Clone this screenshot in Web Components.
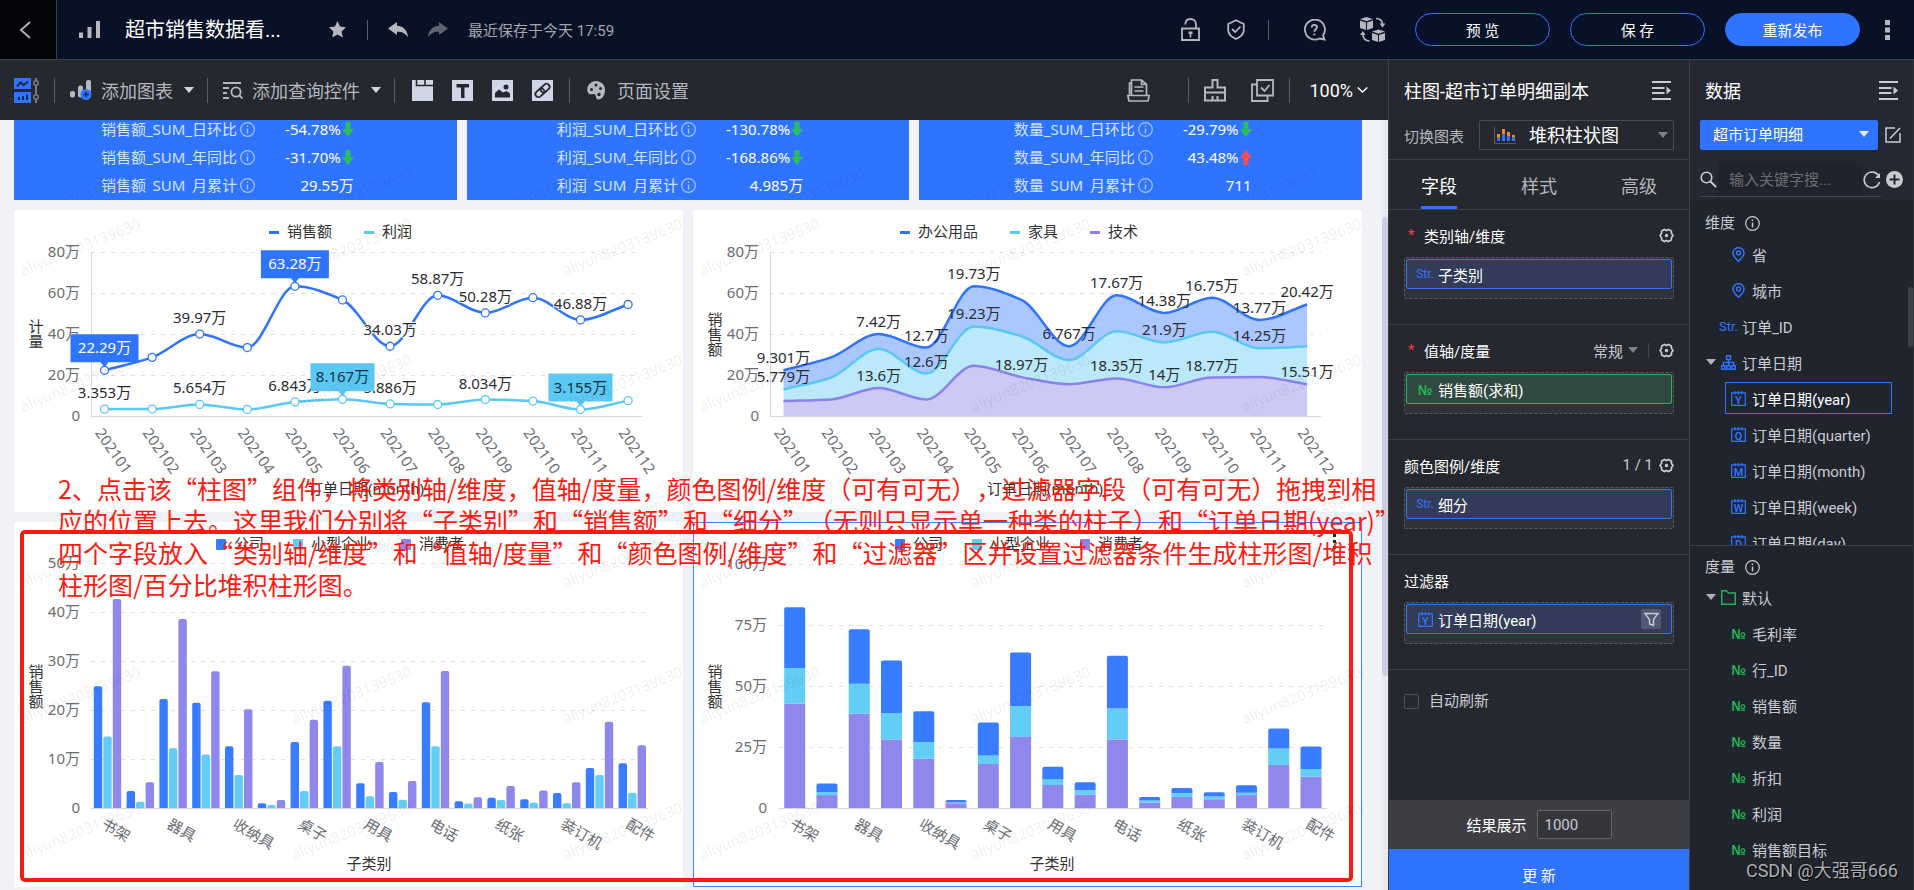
<!DOCTYPE html>
<html lang="zh-CN">
<head>
<meta charset="utf-8">
<title>超市销售数据看板</title>
<style>
html, body { margin: 0; height: 100%; }
body {
  font-family: Roboto, "Noto Sans CJK SC", sans-serif;
  font-size: 15px;
  color: #c9cbd1;
  background: #25282f;
  overflow: hidden;
  --blue: #2f74ff;
  --line: #3d4048;
}
</style>
</head>
<body>
<bi-app></bi-app>
<script>
const define = (tag, html, setup) => {
  const template = document.createElement('template');
  template.innerHTML = html;
  customElements.define(tag, class extends HTMLElement {
    constructor() {
      super();
      this.attachShadow({ mode: 'open' });
    }
    connectedCallback() {
      if (this.shadowRoot.childNodes.length) return;
      this.shadowRoot.append(template.content.cloneNode(true));
      if (setup) setup(this, this.shadowRoot);
    }
  });
};

/* ---------- icons: [width, height, markup] ---------- */
const S = (w, d) => `<path d="${d}" fill="none" stroke="currentColor" stroke-width="${w}"/>`;
const F = d => `<path d="${d}" fill="currentColor"/>`;
const calendar = ch => [15, 15,
  S(1.2, 'M.7 1.8H14.3V14.3H.7Z M4 0V3.5M7.5 0V3.5M11 0V3.5') +
  `<text x="7.5" y="12.5" text-anchor="middle" font-size="11" font-weight="600" font-family="Roboto,sans-serif" fill="currentColor">${ch}</text>`];
const ICONS = {
  back: [12, 18, S(1.8, 'M11 1 2 9 11 17')],
  bars: [21, 17, F('M0 11.5h4V17H0zM8.500 6h4v11h-4zM17 0h4v17h-4z')],
  star: [17, 17, F('M8.5 0 11 5.600 17 6.300 12.600 10.500 13.800 16.500 8.500 13.500 3.200 16.500 4.400 10.500 0 6.300 6 5.600Z')],
  undo: [20, 16, F('M0 6.500 9 0V3.700C15.500 4 19.500 8.500 20 15.500 17.500 11.500 14.500 9.700 9 9.800V13Z')],
  redo: [20, 16, F('M20 6.500 11 0V3.700C4.500 4 .5 8.500 0 15.500 2.500 11.500 5.500 9.700 11 9.800V13Z')],
  lock: [19, 23, S(1.8, 'M1 10.5H18V22H1Z M4.300 6.500C4.500 2.800 6.500 1 9.500 1S15 3.200 15 6.500V10.500') + F('M7.500 13.500h4v2.500h-1.200v3.500H8.700V16H7.500z')],
  shield: [18, 21, S(1.8, 'M9 1.200 16.800 5V11C16.800 15 13.500 18 9 20 4.500 18 1.200 15 1.200 11V5Z M5 10 8.200 13 13.500 7.500')],
  help: [23, 22, S(1.8, 'M20 16.500A10 10 0 1 0 16.500 19.500L21.500 20.500Z M8.700 8.500C8.700 6.700 9.800 5.800 11.300 5.800S14 6.800 14 8.300C14 10.300 11.300 10.300 11.300 12.800M11.300 14.500V16.500')],
  cubes: [26, 25, F('M0 2 6.500 0 13 2 6.500 4.200ZM0 3.500 6 5.500V13L0 11ZM13 3.500 7 5.500V13L13 11ZM12 14.500 18.500 12.500 25 14.500 18.500 16.700ZM12 16 18 18V25L12 23ZM25 16 19 18V25L25 23Z') + S(1.6, 'M16 1.500C20 1.500 22.500 4 22.500 8M9.500 24C5.500 24 2.800 21.500 2.800 16.500') + F('M19.500 6.500H25.500L22.500 10.500ZM0 18H5.600L2.800 14Z')],
  more: [5, 20, F('M0 0h5v5H0zM0 7.500h5v5H0zM0 15h5v5H0z')],
  layout: [25, 25, '<path d="M0 0H17V11H0ZM0 14H17V25H0Z" fill="#2f74ff"/><path d="M3 8.500 6.500 4.500 9.500 7 14 3.500" stroke="#1c2742" stroke-width="2" fill="none"/><path d="M4 19h2v3H4zM8 18h2v4H8zM12 16.500h2V22h-2z" fill="#1c2742"/><path d="M22 0V25" stroke="#777a82" stroke-width="2"/><circle cx="22" cy="5" r="2.200" fill="#25282f" stroke="#777a82" stroke-width="1.500"/><circle cx="22" cy="19" r="2.200" fill="#25282f" stroke="#777a82" stroke-width="1.500"/>'],
  addchart: [22, 20, '<rect x="0" y="11" width="5" height="6.500" rx="2" fill="#b5b7bc"/><rect x="8" y="5.500" width="5" height="12" rx="2" fill="#b5b7bc"/><rect x="16" y="0" width="5" height="16" rx="2" fill="#b5b7bc"/><circle cx="16" cy="14.500" r="5.500" fill="#2f74ff"/><path d="M16 11.700V17.300M13.200 14.500H18.800" stroke="#1c2742" stroke-width="1.500"/>'],
  query: [20, 17, S(1.8, 'M0 1H18M0 6H6M0 11H4M0 16H6M16.500 13.500 19.500 16.500') + '<circle cx="13" cy="10" r="4.600" fill="none" stroke="currentColor" stroke-width="1.800"/>'],
  tab: [21, 21, '<path d="M0 0H21V21H0Z" fill="#d0d6e6"/><path d="M4.500 0V5.500H21M13 0V5.500" fill="none" stroke="#25282f" stroke-width="1.600"/>'],
  text: [21, 21, '<path d="M0 0H21V21H0Z" fill="#d0d6e6"/><path d="M4.500 4H17V7.500H12.500V18H9V7.500H4.500Z" fill="#25282f"/>'],
  image: [21, 21, '<path d="M0 0H21V21H0Z" fill="#d0d6e6"/><path d="M3 17.500V13L7 9.500 11 12.500 14.500 11 18 13.500V17.500Z" fill="#25282f"/><circle cx="14" cy="7" r="2.500" fill="#25282f"/>'],
  link: [21, 21, '<path d="M0 0H21V21H0Z" fill="#d0d6e6"/><g fill="none" stroke="#25282f" stroke-width="1.800" transform="rotate(-42 10.500 10.500)"><rect x="2" y="7.500" width="10" height="6" rx="3"/><rect x="9" y="7.500" width="10" height="6" rx="3"/></g>'],
  palette: [18, 19, '<path d="M9 0C14 0 18 3.500 18 9S15 18.500 11.500 18.500C8.500 18.500 9.500 15 8 13.500 6.500 12 4 14.500 1.500 12.500-2 8 2 0 9 0Z" fill="#b5b7bc"/><g fill="#25282f"><circle cx="4.500" cy="8.500" r="1.500"/><circle cx="9" cy="4" r="1.500"/><circle cx="13.500" cy="7.500" r="1.500"/><circle cx="12" cy="13.500" r="1.700"/></g>'],
  book: [23, 23, S(1.7, 'M4.500 15.500V4H2.500V15.500M4.500 16V1H14.500L19.500 5.500V16M14.500 1V5.500H19.500M7.500 8H16.500M7.500 12H16.500M.8 16.500H22.200L21 22H2Z')],
  brush: [22, 23, S(2, 'M1 21.500V8.500H8.500V1H13.500V8.500H21V21.500ZM1 13.500H21M8.500 21V17M13.500 21V17')],
  copycheck: [23, 23, S(1.8, 'M6 1H22V16.500H6ZM6 5.500H1V22H16.500V16.500M10 8.500 13.500 12 18.500 6')],
  down: [11, 6, S(1.4, 'M.7.500 5.500 5 10.300.500')],
  caret: [10, 6, F('M0 0H10L5 6Z')],
  collapse: [19, 19, S(1.8, 'M0 1H19M0 7H12.500M0 12H12.500M0 18H19') + F('M14.500 5.500 19 9.500 14.500 13.500Z')],
  stacked: [22, 17, '<path d="M.500 0V16.500H22" fill="none" stroke="#55585f"/><path d="M3 9h3v5H3zM8 7h3v7H8zM13 7.500h3V14h-3zM18 10.500h3V14h-3z" fill="#2f74ff"/><path d="M3 7h3v3.500H3zM8 2h3v5H8zM13 5h3v4h-3zM18 8h3v2.500h-3z" fill="#f08a24"/>'],
  gear: [15, 15, S(1.7, 'M5.500 1.500 7.500 2.500 9.500 1.500 12.300 3 12.500 5.500 14 7.500 12.500 9.500 12.300 12 9.500 13.500 7.500 12.500 5.500 13.500 2.700 12 2.500 9.500 1 7.500 2.500 5.500 2.700 3Z') + '<circle cx="7.500" cy="7.500" r="1.700" fill="currentColor"/>'],
  funnel: [15, 15, S(1.4, 'M1 1.500H14L9.500 7.500V13.500L5.500 12V7.500Z')],
  edit: [16, 16, S(1.5, 'M10 1H1V15H15V6M5 11.500 15 1')],
  search: [17, 17, '<circle cx="6.500" cy="6.500" r="5.300" fill="none" stroke="currentColor" stroke-width="1.600"/>' + S(1.8, 'M10.500 10.500 16 16')],
  refresh: [18, 18, S(1.6, 'M15.500 4.500A7.800 7.800 0 1 0 16.500 11') + F('M17 2V7H12Z')],
  plus: [17, 17, '<circle cx="8.500" cy="8.500" r="8.500" fill="#c9cbd1"/><path d="M8.500 3.500V13.500M3.500 8.500H13.500" stroke="#252833" stroke-width="2"/>'],
  info: [15, 15, '<circle cx="7.500" cy="7.500" r="6.800" fill="none" stroke="currentColor" stroke-width="1.200"/><path d="M7.500 6.500V11.500M7.500 3.500V5" stroke="currentColor" stroke-width="1.400"/>'],
  pin: [15, 15, S(1.5, 'M7.500 14.300C4 11 2 8.800 2 6.200A5.500 5.500 0 0 1 13 6.200C13 8.800 11 11 7.500 14.300Z') + '<circle cx="7.500" cy="6" r="2" fill="none" stroke="currentColor" stroke-width="1.400"/>'],
  tree: [15, 15, S(1.4, 'M5.500.700H9.500V4.500H5.500ZM.700 10.700H4V14.300H.700ZM5.800 10.700H9.200V14.300H5.800ZM11 10.700H14.300V14.300H11ZM7.500 4.500V10.700M2.300 10.700V7.500H12.700V10.700')],
  folder: [15, 15, '<path d="M.700.700H5.500L7.500 3H14.300V14.300H.700Z" fill="none" stroke="currentColor" stroke-width="1.500"/>'],
  arrowdown: [12, 15, '<path d="M3.500 0H8.500V7H12L6 15 0 7H3.500Z" fill="#2bbf5b"/>'],
  arrowup: [12, 15, '<path d="M3.500 15H8.500V8H12L6 0 0 8H3.500Z" fill="#fa4f4a"/>'],
  calY: calendar('Y'), calQ: calendar('Q'), calM: calendar('M'), calW: calendar('W'), calD: calendar('D')
};
define('ui-icon', `<style>:host{display:inline-flex;flex:none}svg{display:block}</style>`, (host, root) => {
  const [w, h, body] = ICONS[host.getAttribute('name')];
  root.innerHTML += `<svg width="${w}" height="${h}" viewBox="0 0 ${w} ${h}" aria-hidden="true">${body}</svg>`;
});

/* ---------- top bar ---------- */
define('top-bar', `
<style>
:host { display: flex; align-items: center; height: 59px; background: #081126; border-bottom: 1px solid var(--line); color: #b5b7bc; }
button { font: inherit; color: inherit; background: none; border: 0; padding: 0; cursor: pointer; display: flex; align-items: center; justify-content: center; }
.back { width: 57px; height: 59px; background: #02040a; border-right: 1px solid var(--line); box-sizing: border-box; padding-right: 6px; }
.logo { margin: 0 25px 0 22px; }
h1 { margin: 0 46px 0 0; font-size: 20px; font-weight: 400; line-height: 28px; color: #fff; width: 158px; white-space: nowrap; }
.rule { width: 1px; height: 20px; background: #5a5f6b; }
.star { margin-right: 21px; }
.undo { margin: 0 20px; }
.redo { margin-right: 20px; opacity: .5; }
.saved { color: #a3a7af; white-space: nowrap; }
.right { margin-left: auto; display: flex; align-items: center; padding-right: 24px; }
.shield { margin: 0 23px 0 27px; }
.help { margin: 0 34px; }
.cubes { margin-right: 29px; }
.pill { box-sizing: border-box; width: 135px; height: 33px; border: 1px solid var(--blue); border-radius: 17px; margin-right: 20px; color: #fff; }
.solid { background: var(--blue); margin-right: 25px; }
</style>
<button class="back" aria-label="返回"><ui-icon name="back"></ui-icon></button>
<ui-icon class="logo" name="bars"></ui-icon>
<h1>超市销售数据看...</h1>
<button class="star" aria-label="收藏"><ui-icon name="star"></ui-icon></button>
<span class="rule"></span>
<button class="undo" aria-label="撤销"><ui-icon name="undo"></ui-icon></button>
<button class="redo" aria-label="重做"><ui-icon name="redo"></ui-icon></button>
<span class="saved">最近保存于今天 17:59</span>
<div class="right">
  <button aria-label="解锁"><ui-icon name="lock"></ui-icon></button>
  <button class="shield" aria-label="安全"><ui-icon name="shield"></ui-icon></button>
  <span class="rule"></span>
  <button class="help" aria-label="帮助"><ui-icon name="help"></ui-icon></button>
  <button class="cubes" aria-label="切换"><ui-icon name="cubes"></ui-icon></button>
  <button class="pill">预 览</button>
  <button class="pill">保 存</button>
  <button class="pill solid">重新发布</button>
  <button aria-label="更多"><ui-icon name="more"></ui-icon></button>
</div>`);

/* ---------- tool bar ---------- */
define('tool-bar', `
<style>
:host { display: flex; align-items: center; height: 60px; padding: 0 20px 0 14px; background: #25282f; color: #b5b7bc; font-size: 18px; box-sizing: border-box; }
button { font: inherit; color: inherit; background: none; border: 0; padding: 0; cursor: pointer; display: flex; align-items: center; white-space: nowrap; }
.rule { width: 1px; height: 25px; background: #5c5f66; margin: 0 15px; }
.gap { gap: 9px; }
.gap .caret { margin: 0 -2px 0 2px; color: #d0d6e6; }
.set { display: flex; gap: 19px; margin: 0 1px 0 2px; }
.page { gap: 12px; margin-left: 2px; }
.right { margin-left: auto; display: flex; align-items: center; }
.book { margin-right: 23px; }
.copy { margin-left: 25px; }
.zoom { margin-left: 4px; gap: 4px; color: #fff; }
</style>
<button aria-label="布局"><ui-icon name="layout"></ui-icon></button>
<span class="rule"></span>
<button class="gap"><ui-icon name="addchart"></ui-icon>添加图表<ui-icon class="caret" name="caret"></ui-icon></button>
<span class="rule"></span>
<button class="gap"><ui-icon name="query"></ui-icon>添加查询控件<ui-icon class="caret" name="caret"></ui-icon></button>
<span class="rule"></span>
<div class="set">
  <button aria-label="选项卡"><ui-icon name="tab"></ui-icon></button>
  <button aria-label="文本"><ui-icon name="text"></ui-icon></button>
  <button aria-label="图片"><ui-icon name="image"></ui-icon></button>
  <button aria-label="链接"><ui-icon name="link"></ui-icon></button>
</div>
<span class="rule"></span>
<button class="page"><ui-icon name="palette"></ui-icon>页面设置</button>
<div class="right">
  <button class="book" aria-label="文档"><ui-icon name="book"></ui-icon></button>
  <span class="rule"></span>
  <button aria-label="清理"><ui-icon name="brush"></ui-icon></button>
  <button class="copy" aria-label="批量"><ui-icon name="copycheck"></ui-icon></button>
  <span class="rule"></span>
  <button class="zoom">100%<ui-icon name="down"></ui-icon></button>
</div>`);

/* ---------- repeated account mark laid over every card ---------- */
define('account-mark', `
<style>
:host { position: absolute; inset: 0; overflow: hidden; pointer-events: none; }
svg { display: block; width: 100%; height: 100%; }
text { font: 15px "Noto Sans", sans-serif; fill: #000; fill-opacity: .08; }
</style>`, (host, root) => {
  const top = Number(host.getAttribute('top') || 66);
  const cols = Number(host.getAttribute('cols') || 3);
  const rows = Number(host.getAttribute('rows') || 3);
  let s = '';
  for (let r = 0; r < rows; r++) for (let c = 0; c < cols; c++)
    s += `<text transform="translate(${9 + c * 271} ${top + r * 136}) rotate(-22)">aliyun8203139630</text>`;
  root.innerHTML += `<svg aria-hidden="true">${s}</svg>`;
});

/* ---------- KPI card ---------- */
define('kpi-card', `
<style>
:host { display: block; position: relative; background: var(--blue); color: #fff; font-family: "Noto Sans", "Noto Sans CJK SC", sans-serif; padding: 0 16px 5px 0; }
dl { margin: -1px 0 0; display: grid; grid-template-columns: auto auto; grid-auto-rows: 20px; justify-content: center; gap: 8px 30px; line-height: 20px; white-space: nowrap; }
dt { display: flex; align-items: center; gap: 3px; color: #d5e3ff; }
dt ui-icon { color: #a9c6ff; }
dd { margin: 0; display: flex; align-items: center; justify-content: flex-end; gap: 1px; }
.faint { opacity: 0; }
</style>
<dl></dl>
<account-mark top="106" cols="2" rows="1"></account-mark>`, (host, root) => {
  const name = host.getAttribute('name');
  root.querySelector('dl').innerHTML = host.getAttribute('rows').split(';').map(row => {
    const [label, value, dir] = row.split(',');
    const join = dir ? '_' : '<span class="faint">_</span>';
    return `<dt><span>${name}${join}SUM${join}${label}</span><ui-icon name="info"></ui-icon></dt><dd>${value}${dir ? `<ui-icon name="arrow${dir}"></ui-icon>` : ''}</dd>`;
  }).join('');
});

/* ---------- charts ---------- */
const BLUE = '#2f74ff', CYAN = '#5bc8f3', VIOLET = '#8b83ea';
const CHART_CSS = `<style>
:host { display: block; position: relative; background: #fff; font-family: "Noto Sans", "Noto Sans CJK SC", sans-serif; }
:host([selected]) { outline: 1px solid #3b86ff; outline-offset: -1px; }
svg.plot { display: block; width: 100%; height: auto; }
text { font-size: 15px; fill: #333; }
.tick { fill: #6a6d73; }
.value { fill: #2a2c30; }
.halo { paint-order: stroke; stroke: #fff; stroke-width: 2px; }
.grid { stroke: #dfe0e3; stroke-dasharray: 4 6; }
.axis { stroke: #d6d7da; fill: none; }
.menu { position: absolute; top: 12px; right: 25px; width: 5px; height: 15px; padding: 0; border: 0; background: none; color: #222; }
.menu svg { display: block; }
</style>`;
const text = (x, y, s, anchor = 'middle', cls = '') => `<text class="${cls}" x="${x}" y="${y + 5}" text-anchor="${anchor}">${s}</text>`;
const vertical = (x, y, s) => [...s].map((c, i) => text(x, y + i * 15, c)).join('');
const grid = (x0, x1, y0, step, labels, xl) => labels.map((l, i) => {
  const y = y0 - step * i;
  return text(xl, y, l, 'end', 'tick') + (i ? `<path class="grid" d="M${x0} ${y + .5}H${x1}"/>` : `<path class="axis" d="M${x0} ${y + .5}H${x1}"/>`);
}).join('');
const slanted = (x, y, s, angle) => `<text class="tick" dy="5" transform="translate(${x} ${y}) rotate(${angle})">${s}</text>`;

/* monotone cubic through the points */
function curve(pts) {
  const n = pts.length, d = [], m = [];
  for (let i = 0; i < n - 1; i++) d.push((pts[i + 1][1] - pts[i][1]) / (pts[i + 1][0] - pts[i][0]));
  for (let i = 0; i < n; i++) {
    if (i === 0) m.push(d[0]);
    else if (i === n - 1) m.push(d[n - 2]);
    else m.push(d[i - 1] * d[i] <= 0 ? 0 : 2 * d[i - 1] * d[i] / (d[i - 1] + d[i]));
  }
  let s = `${pts[0][0]} ${pts[0][1]}`;
  for (let i = 0; i < n - 1; i++) {
    const h = (pts[i + 1][0] - pts[i][0]) / 3;
    s += `C${pts[i][0] + h} ${pts[i][1] + m[i] * h} ${pts[i + 1][0] - h} ${pts[i + 1][1] - m[i + 1] * h} ${pts[i + 1][0]} ${pts[i + 1][1]}`;
  }
  return s;
}
const MONTHS = Array.from({ length: 12 }, (_, i) => 202101 + i);
const TOTAL = [22.29, 28.6, 39.97, 33.4, 63.28, 56.6, 34.03, 58.87, 50.28, 57.7, 46.88, 54.4];
const mx = i => 90.5 + i * 47.6;
const my = v => 206 - v * 2.05;
const monthFrame = title => grid(77, 628, 206, 41, ['0', '20万', '40万', '60万', '80万'], 66) +
  '<path class="axis" d="M77.500 42V206"/>' +
  MONTHS.map((m, i) => slanted(mx(i) - 6, 220, m, 55)).join('') +
  text(352, 279, '订单日期(month)') + title;

define('trend-chart', CHART_CSS, (host, root) => {
  const profit = [3.353, 3.4, 5.654, 3.2, 6.843, 8.167, 5.886, 5.6, 8.034, 7.3, 3.155, 7.5];
  const series = [[TOTAL, BLUE, [0, 4], [2, 6, 7, 8, 10]], [profit, CYAN, [5, 10], [0, 2, 4, 6, 8]]];
  let s = monthFrame(vertical(22, 117, '计量'));
  [['销售额', 255, BLUE], ['利润', 350, CYAN]].forEach(([n, x, c]) => { s += `<rect x="${x}" y="21" width="10" height="3" fill="${c}"/>` + text(x + 18, 22, n, 'start'); });
  for (const [vals, color] of series) s += `<path d="M${curve(vals.map((v, i) => [mx(i), my(v)]))}" fill="none" stroke="${color}" stroke-width="2.500"/>`;
  for (const [vals, , , labels] of series) for (const i of labels) s += text(mx(i), my(vals[i]) - 16, vals[i] + '万', 'middle', 'value halo');
  for (const [vals, color, tips] of series) {
    for (const i of tips) {
      const x = mx(i), y = my(vals[i]), w = color === BLUE ? 34 : 32;
      s += `<path d="M${x - w} ${y - 36}H${x + w}V${y - 8}H${x + 4}L${x} ${y - 3}L${x - 4} ${y - 8}H${x - w}Z" fill="${color}"/>` +
        `<text x="${x}" y="${y - 17}" text-anchor="middle" style="fill:${color === BLUE ? '#fff' : '#16323f'}">${vals[i]}万</text>`;
    }
    vals.forEach((v, i) => { s += `<circle cx="${mx(i)}" cy="${my(v)}" r="4" fill="#fff" stroke="${color}" stroke-width="1.300"/>`; });
  }
  root.innerHTML += `<svg class="plot" viewBox="0 0 669 302">${s}</svg><account-mark></account-mark>`;
});

define('area-chart', CHART_CSS, (host, root) => {
  const low = [7.3, 8.1, 13.6, 8.1, 24.5, 18.97, 15.5, 18.35, 14, 18.77, 19, 15.51];
  const mid = [13, 18.8, 32.7, 20.7, 43.7, 38.9, 27.3, 41.3, 35.9, 41.1, 33, 34];
  const zero = low.map(() => 0);
  const pts = v => v.map((y, i) => [mx(i), my(y)]);
  const area = (a, b, c) => `<path d="M${curve(pts(a))}L${curve(pts(b).reverse())}Z" fill="${c}"/>`;
  const line = (a, c) => `<path d="M${curve(pts(a))}" fill="none" stroke="${c}" stroke-width="2.500"/>`;
  let s = monthFrame(vertical(22, 110, '销售额')) +
    area(TOTAL, mid, '#aac7ff') + area(mid, low, '#bbe9fa') + area(low, zero, '#cdc9f5') +
    line(TOTAL, BLUE) + line(mid, CYAN) + line(low, VIOLET);
  [['办公用品', 207, BLUE], ['家具', 317, CYAN], ['技术', 397, VIOLET]].forEach(([n, x, c]) => { s += `<rect x="${x}" y="21" width="10" height="3" fill="${c}"/>` + text(x + 18, 22, n, 'start'); });
  const labels = [
    [TOTAL, { 0: '9.301', 2: '7.42', 3: '12.7', 4: '19.73', 6: '6.767', 7: '17.67', 8: '14.38', 9: '16.75', 10: '13.77', 11: '20.42' }],
    [mid, { 0: '5.779', 3: '12.6', 4: '19.23', 8: '21.9', 10: '14.25' }],
    [low, { 2: '13.6', 5: '18.97', 7: '18.35', 8: '14', 9: '18.77', 11: '15.51' }]];
  for (const [v, map] of labels) for (const i in map) s += text(mx(+i), my(v[i]) - 12, map[i] + '万', 'middle', 'value');
  root.innerHTML += `<svg class="plot" viewBox="0 0 669 302">${s}</svg><account-mark></account-mark>`;
});

const GOODS = [[25, 14.66, 42.9], [3.5, 1.3, 5.3], [22.4, 12.26, 38.8], [21.6, 10.96, 28.1], [12.7, 6.8, 20.3], [1, .6, 1.64], [13.56, 3.5, 18.1], [22, 12.7, 29.2], [5.1, 2.4, 9.45], [3.3, 1.7, 5.55], [21.7, 12.7, 28.15], [1.4, .9, 2.2], [2.1, 1.64, 4.5], [1.8, 1.1, 3.6], [3.1, 1, 5.3], [8.2, 6.8, 17.7], [9.2, 3.15, 12.9]];
const GOODS_NAMES = ['书架', '器具', '收纳具', '桌子', '用具', '电话', '纸张', '装订机', '配件'];
const BARS = ['#387dff', '#62cdf5', '#8f87ec'];
const topRounded = (x, y, w, h, c) => {
  const r = Math.min(2, h);
  return `<path d="M${x} ${y + h}V${y + r}Q${x} ${y} ${x + r} ${y}H${x + w - r}Q${x + w} ${y} ${x + w} ${y + r}V${y + h}Z" fill="${c}"/>`;
};
define('goods-chart', CHART_CSS, (host, root) => {
  const stacked = host.hasAttribute('stacked');
  const legend = [['公司', 202], ['小型企业', 279], ['消费者', 387]]
    .map(([n, x], i) => `<rect x="${x}" y="17" width="10" height="11" rx="1" fill="${BARS[i]}"/>` + text(x + 18, 22, n, 'start')).join('');
  let s = legend + vertical(22, 150, '销售额') + text(stacked ? 359 : 355, 342, '子类别');
  const x0 = stacked ? 91.2 : 79.8, pitch = stacked ? 32.27 : 32.8;
  if (stacked) {
    s += grid(86, 634, 286, 61, ['0', '25万', '50万', '75万', '100万'], 74);
    GOODS.forEach(([a, b, c], g) => {
      const x = x0 + g * pitch, k = 2.433, y1 = 286 - c * k, y2 = y1 - b * k, y3 = y2 - a * k;
      s += `<rect x="${x}" y="${y1}" width="21" height="${c * k}" fill="${BARS[2]}"/><rect x="${x}" y="${y2}" width="21" height="${b * k}" fill="${BARS[1]}"/>` + topRounded(x, y3, 21, a * k, BARS[0]);
    });
  } else {
    s += grid(77, 634, 286, 49, ['0', '10万', '20万', '30万', '40万', '50万'], 66);
    GOODS.forEach((row, g) => row.forEach((v, i) => {
      s += topRounded(x0 + g * pitch + i * 9.5, 286 - v * 4.87, 8.4, v * 4.87, BARS[i]);
    }));
  }
  GOODS_NAMES.forEach((n, i) => { s += slanted(x0 + i * 2 * pitch + (stacked ? 7 : 9), 301, n, 30); });
  root.innerHTML += `<svg class="plot" viewBox="0 0 669 365">${s}</svg><account-mark></account-mark>` +
    (host.hasAttribute('selected') ? '<button class="menu" aria-label="图表菜单"><svg width="5" height="15"><path d="M1 0h3v3H1zM1 6h3v3H1zM1 12h3v3H1z" fill="currentColor"/></svg></button>' : '');
});

/* ---------- dashboard canvas ---------- */
define('dash-board', `
<style>
:host { display: block; position: relative; overflow: hidden; background: #f0f2f7; padding: 0 26px 0 14px; min-height: 0; }
.kpis { display: grid; grid-template-columns: repeat(3, 1fr); gap: 10px; }
.row { display: grid; grid-template-columns: repeat(2, 1fr); gap: 10px; margin-top: 10px; position: relative; }
.frame { position: absolute; inset: 8px 9px 5px 6px; border: 4px solid #ff1a10; border-radius: 5px; pointer-events: none; }
.track { position: absolute; top: 0; right: 0; bottom: 0; width: 6px; background: #e8eaef; }
.thumb { margin-top: 97px; height: 459px; border-radius: 3px; background: #cbd0e0; }
.note { position: absolute; left: 58px; top: 352px; margin: 0; font: 25px/32px "Noto Sans CJK SC", sans-serif; color: #ff1a10; white-space: nowrap; text-spacing-trim: space-all; }
.note span { display: block; }
</style>
<div class="kpis">
  <kpi-card name="销售额" rows="日环比,-54.78%,down;年同比,-31.70%,down;月累计,29.55万"></kpi-card>
  <kpi-card name="利润" rows="日环比,-130.78%,down;年同比,-168.86%,down;月累计,4.985万"></kpi-card>
  <kpi-card name="数量" rows="日环比,-29.79%,down;年同比,43.48%,up;月累计,711"></kpi-card>
</div>
<div class="row"><trend-chart></trend-chart><area-chart></area-chart></div>
<div class="row"><goods-chart></goods-chart><goods-chart stacked selected></goods-chart><div class="frame"></div></div>
<div class="track"><div class="thumb"></div></div>
<p class="note"><span>2、点击该“柱图”组件，将类别轴/维度，值轴/度量，颜色图例/维度（可有可无），过滤器字段（可有可无）拖拽到相</span><span>应的位置上去。这里我们分别将“子类别”和“销售额”和“细分”（无则只显示单一种类的柱子）和“订单日期(year)”</span><span>四个字段放入“类别轴/维度”和“值轴/度量”和“颜色图例/维度”和“过滤器”区并设置过滤器条件生成柱形图/堆积</span><span>柱形图/百分比堆积柱形图。</span></p>`);

/* ---------- chart configuration panel ---------- */
define('field-chip', `
<style>
:host { display: flex; align-items: center; gap: 5px; height: 28px; padding: 0 10px; border: 1px solid var(--blue); border-radius: 2px; background: #323c58; color: #fff; }
:host([measure]) { border-color: #22b455; background: #314a41; }
.type { color: var(--blue); width: 16px; display: flex; justify-content: center; white-space: nowrap; font-size: 12px; }
:host([measure]) .type { color: #22b455; font: 600 14px "Noto Sans", sans-serif; }
.filter { margin-left: auto; width: 20px; height: 20px; border: 0; border-radius: 2px; padding: 0; background: #505a74; color: #c9cbd1; display: flex; align-items: center; justify-content: center; }
</style>
<span class="type"></span><slot></slot>`, (host, root) => {
  root.querySelector('.type').innerHTML = host.hasAttribute('measure') ? '№' : host.hasAttribute('date') ? '<ui-icon name="calY"></ui-icon>' : 'Str.';
  if (host.hasAttribute('date')) root.innerHTML += '<button class="filter" aria-label="筛选"><ui-icon name="funnel"></ui-icon></button>';
});
define('field-section', `
<style>
:host { display: block; box-sizing: border-box; height: 115px; border-bottom: 1px solid var(--line); padding: 14px 15px 0 15px; }
header { display: flex; align-items: center; height: 22px; color: #fff; }
.star { color: #f0403c; width: 20px; padding-left: 4px; box-sizing: border-box; }
.tools { margin-left: auto; display: flex; align-items: center; color: #c9cbd1; }
.drop { margin-top: 11px; height: 38px; box-sizing: content-box; border: 1px dashed #55585e; border-radius: 2px; background: #303238; padding: 1px; }
</style>
<header><span class="star">*</span><span class="label"></span><div class="tools"><slot name="tools"></slot></div></header>
<div class="drop"><slot></slot></div>`, (host, root) => {
  root.querySelector('.label').textContent = host.getAttribute('label');
  if (!host.hasAttribute('required')) root.querySelector('.star').remove();
});
define('config-panel', `
<style>
:host { display: flex; flex-direction: column; box-sizing: border-box; border-left: 1px solid var(--line); background: #25282f; min-height: 0; }
button { font: inherit; color: inherit; background: none; border: 0; padding: 0; cursor: pointer; display: flex; align-items: center; justify-content: center; }
.head { display: flex; align-items: center; justify-content: space-between; height: 60px; padding: 0 18px 0 15px; font-size: 18px; color: #fff; white-space: nowrap; }
.head button { color: #c9cbd1; }
.switch { display: flex; align-items: center; gap: 15px; height: 39px; padding: 0 15px 0 15px; border-bottom: 1px solid var(--line); }
.switch label { color: #b5b7bc; white-space: nowrap; margin-bottom: 9px; }
.pick { position: relative; flex: 1; height: 30px; margin-bottom: 9px; }
.pick select { appearance: none; width: 100%; height: 30px; border: 1px solid #484b52; border-radius: 2px; background: transparent; color: #fff; font: inherit; font-size: 18px; padding: 0 20px 0 49px; }
.pick ui-icon { position: absolute; left: 15px; top: 7px; pointer-events: none; }
.pick .caret { left: auto; right: 6px; top: 12px; color: #7b7f8a; }
.tabs { display: flex; height: 49px; border-bottom: 1px solid var(--line); font-size: 18px; }
.tabs button { flex: 1; color: #b5b7bc; position: relative; }
.tabs [aria-selected=true] { color: #fff; }
.tabs [aria-selected=true]::after { content: ""; position: absolute; bottom: 0; width: 36px; height: 3px; background: var(--blue); }
field-section .mode { gap: 5px; }
.mode ui-icon { color: #7b7f8a; }
.bar { width: 1px; height: 15px; background: #42454c; margin: 0 10px; }
.count { margin-right: 6px; }
.auto { display: flex; align-items: center; gap: 10px; margin: 20px 15px; line-height: 22px; }
.auto input { appearance: none; width: 15px; height: 15px; margin: 0; border: 1px solid #50535a; border-radius: 2px; }
.foot { margin-top: auto; height: 49px; background: #3e3f44; display: flex; align-items: center; justify-content: center; gap: 10px; color: #fff; }
.foot input { box-sizing: border-box; width: 75px; height: 29px; border: 1px solid #62646a; border-radius: 2px; background: #35363b; color: #c9cbd1; font: inherit; padding: 0 7px; }
.update { height: 41px; background: var(--blue); color: #fff; padding-top: 10px; box-sizing: border-box; }
</style>
<div class="head"><span>柱图-超市订单明细副本</span><button aria-label="收起"><ui-icon name="collapse"></ui-icon></button></div>
<div class="switch"><label for="kind">切换图表</label>
  <div class="pick"><ui-icon name="stacked"></ui-icon><select id="kind"><option>堆积柱状图</option></select><ui-icon class="caret" name="caret"></ui-icon></div></div>
<div class="tabs" role="tablist"><button role="tab" aria-selected="true">字段</button><button role="tab">样式</button><button role="tab">高级</button></div>
<field-section label="类别轴/维度" required><button slot="tools" aria-label="设置"><ui-icon name="gear"></ui-icon></button><field-chip>子类别</field-chip></field-section>
<field-section label="值轴/度量" required><button class="mode" slot="tools">常规<ui-icon name="caret"></ui-icon></button><span class="bar" slot="tools"></span><button slot="tools" aria-label="设置"><ui-icon name="gear"></ui-icon></button><field-chip measure>销售额(求和)</field-chip></field-section>
<field-section label="颜色图例/维度"><span class="count" slot="tools">1 / 1</span><button slot="tools" aria-label="设置"><ui-icon name="gear"></ui-icon></button><field-chip>细分</field-chip></field-section>
<field-section label="过滤器"><field-chip date>订单日期(year)</field-chip></field-section>
<label class="auto"><input type="checkbox">自动刷新</label>
<div class="foot"><label for="limit">结果展示</label><input id="limit" type="text" value="1000"></div>
<button class="update">更 新</button>`);

/* ---------- data panel ---------- */
define('field-item', `
<style>
:host { display: flex; align-items: center; height: 36px; padding-left: 17px; white-space: nowrap; color: #c9cbd1; }
:host([deep]) .box { margin-left: 18px; }
:host([deep]) .fold { display: none; }
.box { display: flex; align-items: center; gap: 6px; height: 30px; width: 160px; padding: 0 0 0 5px; border: 1px solid transparent; }
.fold { width: 9px; display: flex; color: #b0b2b8; margin-left: -7px; }
:host([selected]) .box { border-color: var(--blue); color: #fff; }
.type { color: var(--blue); width: 15px; display: flex; justify-content: center; font-size: 13px; }
:host([measure]) .type { color: #22b455; font: 600 14px "Noto Sans", sans-serif; }
</style>
<div class="box"><span class="fold"></span><span class="type"></span><slot></slot></div>`, (host, root) => {
  const icon = host.getAttribute('icon');
  root.querySelector('.type').innerHTML = icon ? `<ui-icon name="${icon}"></ui-icon>` : host.hasAttribute('measure') ? '№' : 'Str.';
  if (host.hasAttribute('open')) root.querySelector('.fold').innerHTML = '<ui-icon name="caret"></ui-icon>';
});
define('data-panel', `
<style>
:host { display: flex; flex-direction: column; box-sizing: border-box; border-left: 1px solid var(--line); border-right: 1px solid #30333c; background: #20242d; position: relative; min-height: 0; }
button { font: inherit; color: inherit; background: none; border: 0; padding: 0; cursor: pointer; display: flex; align-items: center; }
.top { background: #252833; height: 141px; flex: none; }
.head { display: flex; align-items: center; justify-content: space-between; height: 60px; padding: 0 15px 0 15px; font-size: 18px; color: #fff; }
.head button { color: #c9cbd1; }
.source { display: flex; align-items: center; gap: 7px; padding: 0 12px 0 10px; }
.pick { position: relative; flex: 1; }
.pick select { appearance: none; display: block; width: 100%; height: 30px; border: 0; border-radius: 2px; background: var(--blue); color: #fff; font: inherit; padding: 0 24px 0 13px; }
.pick ui-icon { position: absolute; right: 9px; top: 11px; color: #e4edff; pointer-events: none; }
.find { display: flex; align-items: center; height: 33px; margin: 13px 32px 0 10px; border-bottom: 1px solid #42454d; }
.find input { flex: 1; min-width: 0; height: 33px; margin: 0 0 0 1px; border: 0; padding: 0 11px; box-sizing: border-box; background: #20232d; color: #fff; font: inherit; }
.find input::placeholder { color: #6a6d75; }
.find .add { margin: 0 -22px 0 5px; }
section { flex: 1 1 0; min-height: 0; overflow: hidden; }
section + section { border-top: 1px solid var(--line); }
h2 { margin: 0; padding: 9px 0 0 15px; height: 26px; font-size: 15px; font-weight: 400; display: flex; align-items: center; gap: 10px; line-height: 22px; }
.measures h2 { height: 24px; }
.green { --blue: #22b455; }
.thumb { position: absolute; right: 0; top: 227px; width: 5px; height: 60px; border-radius: 3px; background: #3c404a; }
.sign { position: absolute; right: 15px; bottom: 6px; font: 18px/26px Roboto, "Noto Sans CJK SC", sans-serif; color: #adafb4; text-shadow: 1px 1px 1px #000; white-space: nowrap; }
</style>
<div class="top">
  <div class="head"><span>数据</span><button aria-label="收起"><ui-icon name="collapse"></ui-icon></button></div>
  <div class="source"><div class="pick"><select aria-label="数据集"><option>超市订单明细</option></select><ui-icon name="caret"></ui-icon></div><button aria-label="编辑"><ui-icon name="edit"></ui-icon></button></div>
  <div class="find"><ui-icon name="search"></ui-icon><input type="text" aria-label="搜索字段" placeholder="输入关键字搜..."><button aria-label="刷新"><ui-icon name="refresh"></ui-icon></button><button class="add" aria-label="新建"><ui-icon name="plus"></ui-icon></button></div>
</div>
<section>
  <h2>维度<ui-icon name="info"></ui-icon></h2>
  <field-item deep icon="pin">省</field-item>
  <field-item deep icon="pin">城市</field-item>
  <field-item>订单_ID</field-item>
  <field-item open icon="tree">订单日期</field-item>
  <field-item deep selected icon="calY">订单日期(year)</field-item>
  <field-item deep icon="calQ">订单日期(quarter)</field-item>
  <field-item deep icon="calM">订单日期(month)</field-item>
  <field-item deep icon="calW">订单日期(week)</field-item>
  <field-item deep icon="calD">订单日期(day)</field-item>
</section>
<section class="measures">
  <h2>度量<ui-icon name="info"></ui-icon></h2>
  <field-item class="green" open icon="folder">默认</field-item>
  <field-item deep measure>毛利率</field-item>
  <field-item deep measure>行_ID</field-item>
  <field-item deep measure>销售额</field-item>
  <field-item deep measure>数量</field-item>
  <field-item deep measure>折扣</field-item>
  <field-item deep measure>利润</field-item>
  <field-item deep measure>销售额目标</field-item>
</section>
<div class="thumb"></div>
<div class="sign">CSDN @大强哥666</div>`);

/* ---------- page ---------- */
define('bi-app', `
<style>
:host { display: grid; height: 100vh; grid-template: 60px 60px minmax(0, 1fr) / minmax(0, 1fr) 301px 225px; }
top-bar { grid-column: 1 / -1; }
config-panel { grid-column: 2; grid-row: 2 / 4; }
data-panel { grid-column: 3; grid-row: 2 / 4; }
</style>
<top-bar></top-bar>
<tool-bar></tool-bar>
<config-panel></config-panel>
<data-panel></data-panel>
<dash-board></dash-board>`);
</script>
</body>
</html>
